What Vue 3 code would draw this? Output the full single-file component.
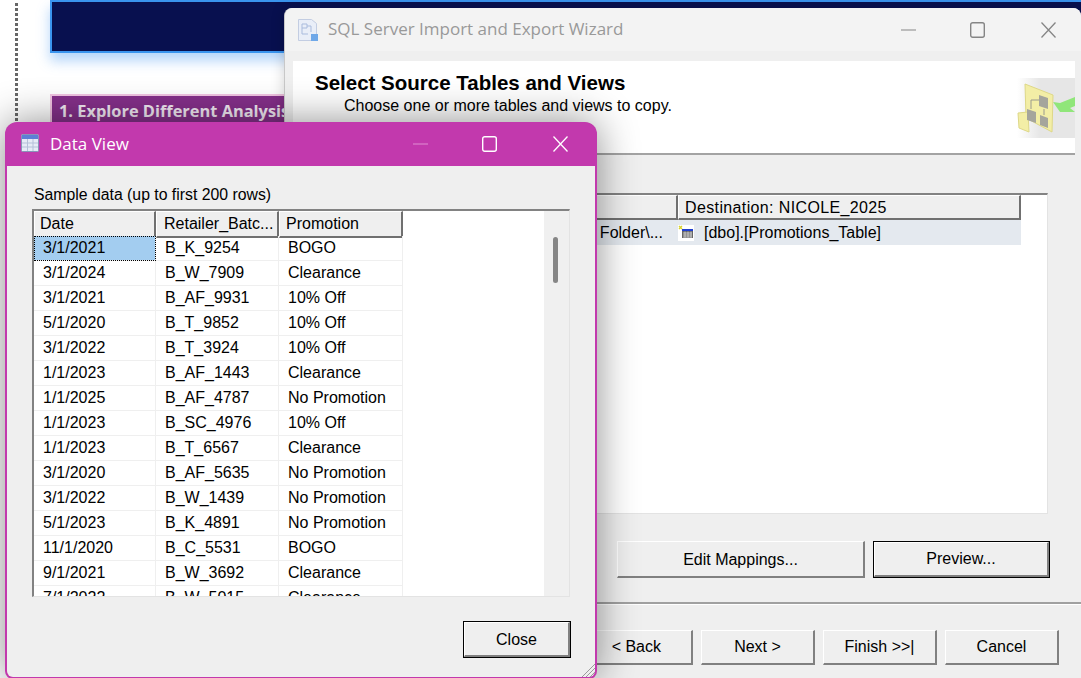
<template>
  <div class="desktop">
    <div class="dots"></div>
    <div class="navy"></div>
    <div class="section">1. Explore Different Analysis</div>

    <!-- wizard behind -->
    <div class="wizard">
      <div class="titlebar wiz-title">
        <svg class="wiz-icon" width="22" height="24" viewBox="0 0 22 24">
          <path d="M1.5 1.5h13l5 4v17h-18z" fill="#e9eef8" stroke="#c3cde2"/>
          <path d="M5 6h5v4H5zM5 10v6h6M10 8h4v6" fill="none" stroke="#a9bbdd"/>
          <rect x="14" y="16" width="7" height="7" fill="#6fa8e8"/>
        </svg>
        <span class="wiz-name">SQL Server Import and Export Wizard</span>
        <div class="win-btns gray">
          <svg width="15" height="16" viewBox="0 0 15 16"><path d="M0 8h15" stroke="currentColor"/></svg>
          <svg width="15" height="16" viewBox="0 0 15 16"><rect x="0.7" y="0.7" width="13.600" height="14.600" rx="2" fill="none" stroke="currentColor" stroke-width="1.400"/></svg>
          <svg class="x" width="15" height="16" viewBox="0 0 15 16"><path d="M0.500 0.500l14 15M14.500 0.500l-14 15" stroke="currentColor" stroke-width="1.300"/></svg>
        </div>
      </div>
      <div class="wiz-head">
        <div>
          <h1>Select Source Tables and Views</h1>
          <p>Choose one or more tables and views to copy.</p>
        </div>
        <div class="art">
          <svg width="58" height="60" viewBox="0 0 58 60">
            <path d="M36 24l7 1 15-6v9l-5 2 5 4H43z" fill="#90e67a"/>
            <path d="M8 6l28 11-1 37-26-14z" fill="#f3eea6" stroke="#ded888"/>
            <path d="M1 35l10-1 1 20-10-4z" fill="#f3eea6" stroke="#ded888"/>
            <path d="M22 17l9 3v11l-9-3zM10 31l9 3v11l-9-3zM23 37l8 3v10l-8-3z" fill="#a5a59c"/>
            <path d="M22 22h-8v9M27 31v6" fill="none" stroke="#9a9a8e"/>
          </svg>
        </div>
      </div>
      <div class="wiz-body">
        <div class="map-table">
          <div class="map-head">
            <div class="cell-h src"></div>
            <div class="cell-h dest">Destination: NICOLE_2025</div>
          </div>
          <div class="map-row">
            <div class="src-val">Folder\...</div>
            <div class="dest-val">
              <svg width="16" height="16" viewBox="0 0 16 16">
                <rect width="16" height="16" fill="#fff"/>
                <path d="M1 1l3 3M4 1L1 4" stroke="#d9d22c" stroke-width="1.400"/>
                <rect x="4" y="4" width="11" height="2" fill="#1f3fd0"/>
                <rect x="4" y="6" width="11" height="7" fill="#666"/>
                <path d="M5 8h9M5 10h9M5 12h9M7 6.500v6M10 6.500v6M13 6.500v6" stroke="#e4e4e4" stroke-width=".7"/>
              </svg>
              <span>[dbo].[Promotions_Table]</span>
            </div>
          </div>
        </div>
        <div class="map-btns">
          <button class="btn edit">Edit Mappings...</button>
          <button class="btn preview focus">Preview...</button>
        </div>
        <div class="sep"></div>
        <div class="nav-btns">
          <button class="btn nav back">&lt; Back</button>
          <button class="btn nav">Next &gt;</button>
          <button class="btn nav">Finish &gt;&gt;|</button>
          <button class="btn nav">Cancel</button>
        </div>
      </div>
    </div>

    <!-- data view dialog on top -->
    <div class="dialog">
      <div class="titlebar dlg-title">
        <svg class="dlg-icon" width="18" height="18" viewBox="0 0 18 18">
          <rect x="0.5" y="0.5" width="17" height="17" rx="1" fill="#e6ebf6" stroke="#8795b8"/>
          <rect x="1" y="1" width="16" height="4" fill="#5d7fd6"/>
          <path d="M1 9h16M1 13h16M6.500 5v12M12 5v12" stroke="#b5c0d9"/>
        </svg>
        <span class="dlg-name">Data View</span>
        <div class="win-btns white">
          <svg width="15" height="16" viewBox="0 0 15 16"><path d="M0 8h15" stroke="#e08fd3"/></svg>
          <svg width="15" height="16" viewBox="0 0 15 16"><rect x="0.7" y="0.7" width="13.600" height="14.600" rx="2" fill="none" stroke="currentColor" stroke-width="1.400"/></svg>
          <svg class="x" width="15" height="16" viewBox="0 0 15 16"><path d="M0.500 0.500l14 15M14.500 0.500l-14 15" stroke="currentColor" stroke-width="1.300"/></svg>
        </div>
      </div>
      <div class="dlg-body">
        <div class="caption">Sample data (up to first 200 rows)</div>
        <div class="grid-wrap">
          <div class="grid">
            <div class="grid-row head">
              <div class="gh">Date</div>
              <div class="gh">Retailer_Batc...</div>
              <div class="gh">Promotion</div>
            </div>
            <div v-for="(r, i) in rows" :key="i" class="grid-row">
              <div class="gc" :class="{ sel: i === 0 }">{{ r[0] }}</div>
              <div class="gc">{{ r[1] }}</div>
              <div class="gc">{{ r[2] }}</div>
            </div>
          </div>
          <div class="scroll"><div class="thumb"></div></div>
        </div>
        <div class="dlg-foot">
          <button class="btn close focus">Close</button>
        </div>
      </div>
      <svg class="grip" width="14" height="14" viewBox="0 0 14 14">
        <path d="M1 14L14 1M5 14l9-9M9 14l5-5" stroke="#9a9a9a"/>
      </svg>
    </div>
  </div>
</template>

<script setup>
const rows = [
  ['3/1/2021', 'B_K_9254', 'BOGO'],
  ['3/1/2024', 'B_W_7909', 'Clearance'],
  ['3/1/2021', 'B_AF_9931', '10% Off'],
  ['5/1/2020', 'B_T_9852', '10% Off'],
  ['3/1/2022', 'B_T_3924', '10% Off'],
  ['1/1/2023', 'B_AF_1443', 'Clearance'],
  ['1/1/2025', 'B_AF_4787', 'No Promotion'],
  ['1/1/2023', 'B_SC_4976', '10% Off'],
  ['1/1/2023', 'B_T_6567', 'Clearance'],
  ['3/1/2020', 'B_AF_5635', 'No Promotion'],
  ['3/1/2022', 'B_W_1439', 'No Promotion'],
  ['5/1/2023', 'B_K_4891', 'No Promotion'],
  ['11/1/2020', 'B_C_5531', 'BOGO'],
  ['9/1/2021', 'B_W_3692', 'Clearance'],
  ['7/1/2022', 'B_W_5015', 'Clearance'],
]
</script>

<style>
html, body { margin: 0; overflow: hidden; background: #fff; }
</style>

<style scoped>
.desktop {
  position: relative;
  width: 1081px;
  height: 678px;
  overflow: hidden;
  background: #fff;
  font-family: "Liberation Sans", Arial, sans-serif;
  font-size: 16px;
  color: #000;
}
.dots {
  position: absolute;
  left: 15px;
  top: 3px;
  height: 125px;
  width: 3px;
  background: repeating-linear-gradient(#666 0 3px, transparent 3px 5px);
}
.navy {
  position: absolute;
  left: 50px;
  top: 0;
  width: 1100px;
  height: 53px;
  box-sizing: border-box;
  background: #08104f;
  border: 2px solid #3a94ee;
  box-shadow: 0 8px 12px rgba(70, 150, 240, .4);
}
.section {
  position: absolute;
  left: 50px;
  top: 94px;
  width: 300px;
  height: 40px;
  box-sizing: border-box;
  padding: 4px 7px;
  background: #85308a;
  border: 2px solid #f2c4e2;
  color: #f4ecf5;
  font-family: "Open Sans", sans-serif;
  font-weight: 700;
  font-size: 16.400px;
  line-height: 22px;
  white-space: nowrap;
}

.titlebar {
  display: flex;
  align-items: center;
  flex: none;
}
.win-btns {
  margin-left: auto;
  display: flex;
  align-items: center;
  gap: 54px;
}
.win-btns .x { margin-left: 2px; }
.win-btns.gray { color: #858585; padding-right: 25px; }
.win-btns.white { color: #fff; padding-right: 27px; }

.wizard {
  position: absolute;
  left: 284px;
  top: 8px;
  width: 797px;
  height: 680px;
  box-sizing: border-box;
  display: flex;
  flex-direction: column;
  background: #efefef;
  border-radius: 8px 8px 0 0;
  border-left: 1px solid #c8c8c8;
  box-shadow: 0 0 14px rgba(0, 0, 0, .18);
}
.wiz-title {
  height: 43px;
  background: #f3f3f3;
  border-radius: 8px 8px 0 0;
  padding-left: 12px;
}
.wiz-name {
  margin: -2px 0 0 9px;
  font-family: "Open Sans", sans-serif;
  font-size: 17px;
  color: #999;
}
.wiz-head {
  margin: 10px 6px 0 8px;
  height: 94px;
  box-sizing: border-box;
  background: #fff;
  border-bottom: 2px solid #a3a3a3;
  display: flex;
  justify-content: space-between;
  align-items: flex-start;
  padding: 10px 0 0 22px;
}
.wiz-head h1 {
  margin: 0;
  font-size: 20.500px;
  line-height: 23px;
  font-weight: 700;
}
.wiz-head p {
  margin: 0;
  padding-left: 29px;
  font-size: 16px;
  line-height: 24px;
}
.art {
  width: 58px;
  height: 60px;
  margin-top: 7px;
  background: linear-gradient(90deg, #fff, #e6e6e6 40%);
}
.wiz-body {
  flex: 1;
  display: flex;
  flex-direction: column;
  padding-top: 38px;
}
.map-table {
  margin-left: 16px;
  width: 747px;
  height: 321px;
  box-sizing: border-box;
  background: #fff;
  border-top: 2px solid #828282;
  border-right: 1px solid #e3e3e3;
  border-bottom: 1px solid #e3e3e3;
}
.map-head {
  display: flex;
  height: 25px;
}
.cell-h {
  box-sizing: border-box;
  background: #efefef;
  border-right: 2px solid #707070;
  border-bottom: 2px solid #707070;
  border-left: 1px solid #fff;
  border-top: 1px solid #fff;
  padding: 1px 6px;
  line-height: 22px;
}
.src { width: 377px; }
.dest { width: 343px; letter-spacing: .37px; }
.map-row {
  display: flex;
  height: 25px;
  width: 720px;
  background: #e4e9ef;
  line-height: 25px;
}
.src-val {
  width: 377px;
  box-sizing: border-box;
  text-align: right;
  padding-right: 15px;
}
.dest-val {
  display: flex;
  align-items: center;
  gap: 10px;
}
.map-btns {
  display: flex;
  justify-content: flex-end;
  align-items: flex-start;
  gap: 9px;
  margin: 27px 32px 0 0;
}
.btn {
  font-family: "Liberation Sans", Arial, sans-serif;
  font-size: 16px;
  color: #000;
  background: #efefef;
  box-sizing: border-box;
  padding: 0;
  border: 1px solid #fff;
  border-right: 2px solid #808080;
  border-bottom: 2px solid #808080;
}
.btn.focus {
  outline: 1px solid #000;
  outline-offset: 0;
  border-color: #fff #808080 #808080 #fff;
}
.edit { width: 248px; height: 37px; padding-top: 1px; }
.preview { width: 175px; height: 35px; margin-top: 1px; }
.sep {
  height: 3px;
  margin: 24px 0 0 0;
  background: #a0a0a0;
  border-bottom: 1px solid #fff;
  box-sizing: border-box;
}
.nav-btns {
  display: flex;
  justify-content: flex-end;
  gap: 8px;
  margin: 25px 22px 0 0;
}
.nav { width: 114px; height: 35px; }
.back { text-align: right; padding-right: 30px; width: 160px; }

.dialog {
  position: absolute;
  left: 5px;
  top: 122px;
  width: 592px;
  height: 557px;
  box-sizing: border-box;
  display: flex;
  flex-direction: column;
  background: #c239ad;
  border-radius: 12px 12px 8px 8px;
  padding: 0 2px 2px;
  box-shadow: 0 0 40px rgba(0, 0, 0, .45);
}
.dlg-title {
  height: 44px;
  padding-left: 14px;
  color: #fff;
}
.dlg-icon { margin-bottom: 2px; }
.dlg-name {
  margin: -2px 0 0 11px;
  font-family: "Open Sans", sans-serif;
  font-size: 17px;
}
.dlg-body {
  flex: 1;
  background: #efefef;
  border-radius: 0 0 6px 6px;
  padding-left: 25px;
  display: flex;
  flex-direction: column;
  min-height: 0;
}
.caption {
  margin: 20px 0 0 2px;
  line-height: 18px;
  font-size: 15.800px;
}
.grid-wrap {
  margin-top: 5px;
  width: 538px;
  height: 388px;
  box-sizing: border-box;
  display: flex;
  background: #fff;
  border-top: 2px solid #828282;
  border-left: 2px solid #828282;
  border-right: 1px solid #e3e3e3;
  border-bottom: 1px solid #e3e3e3;
  overflow: hidden;
}
.grid {
  flex: 1;
  overflow: hidden;
}
.grid-row {
  display: grid;
  grid-template-columns: 122px 123px 124px;
  height: 25px;
}
.gh {
  box-sizing: border-box;
  background: #efefef;
  border-right: 2px solid #707070;
  border-bottom: 2px solid #707070;
  border-left: 1px solid #fff;
  border-top: 1px solid #fff;
  padding: 1px 6px;
  line-height: 22px;
  white-space: nowrap;
}
.gh:first-child { padding-left: 5px; }
.gh:nth-child(2) { padding-left: 7px; }
.gc {
  box-sizing: border-box;
  padding: 0 9px;
  line-height: 24px;
  border-right: 1px solid #efefef;
  border-bottom: 1px solid #efefef;
  white-space: nowrap;
}
.gc.sel {
  background: #a3cdf0;
  outline: 1px dotted #000;
  outline-offset: -1px;
}
.scroll {
  width: 25px;
  flex: none;
  background: #f0f0f0;
}
.thumb {
  margin: 26px 0 0 9px;
  width: 5px;
  height: 46px;
  border-radius: 3px;
  background: #868686;
}
.dlg-foot {
  display: flex;
  justify-content: flex-end;
  padding: 25px 25px 0 0;
}
.close { width: 106px; height: 35px; padding-top: 1px; }
.grip {
  position: absolute;
  right: 2px;
  bottom: 2px;
}
</style>
